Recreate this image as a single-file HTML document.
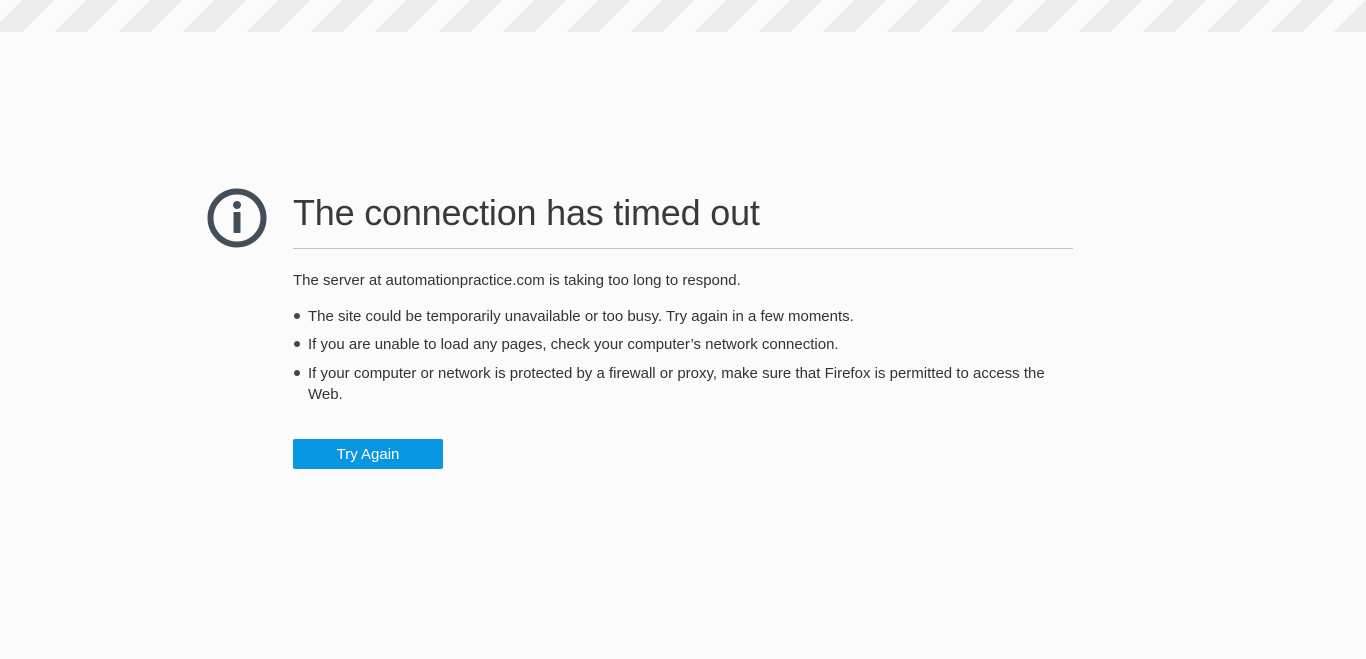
<!DOCTYPE html>
<html><head><meta charset="utf-8"><style>
html,body{margin:0;padding:0;width:1366px;height:659px;background:#fbfbfb;overflow:hidden;font-family:"Liberation Sans",sans-serif;color:#333}
.stripes{position:absolute;left:0;top:0;width:1366px;height:32px;background:repeating-linear-gradient(-45deg,#ededed 0,#ededed 22.63px,#fbfbfb 22.63px,#fbfbfb 45.25px);}
.icon{position:absolute;left:207px;top:188px}
h1{position:absolute;left:293px;top:192px;margin:0;font-weight:normal;font-size:36px;color:#3a3a3a;letter-spacing:-0.2px;white-space:nowrap}
.hr{position:absolute;left:293px;top:248px;width:780px;height:1px;background:#c4c4c4}
.p{position:absolute;left:293px;font-size:15px;white-space:nowrap}
.b{position:absolute;left:293px;font-size:15px;line-height:21px;width:780px}
.b:before{content:"";position:absolute;left:1px;top:7px;width:6px;height:6px;border-radius:50%;background:#3c4551}
.b span{display:block;margin-left:15px}
.btn{position:absolute;left:293px;top:439px;width:150px;height:30px;background:#0996e0;border-radius:2px;color:#fff;font-size:15px;text-align:center;line-height:32px}
</style></head><body>
<div class="stripes"></div>
<svg class="icon" width="60" height="60" viewBox="0 0 60 60"><circle cx="30" cy="30" r="26.5" fill="none" stroke="#434e5b" stroke-width="6"/><circle cx="30" cy="17" r="4" fill="#434e5b"/><rect x="26.5" y="24" width="7" height="21" rx="1" fill="#434e5b"/></svg>
<h1>The connection has timed out</h1>
<div class="hr"></div>
<div class="p" style="top:272px">The server at automationpractice.com is taking too long to respond.</div>
<div class="b" style="top:306px"><span>The site could be temporarily unavailable or too busy. Try again in a few moments.</span></div>
<div class="b" style="top:334px"><span>If you are unable to load any pages, check your computer’s network connection.</span></div>
<div class="b" style="top:363px"><span>If your computer or network is protected by a firewall or proxy, make sure that Firefox is permitted to access the Web.</span></div>
<div class="btn">Try Again</div>
</body></html>
